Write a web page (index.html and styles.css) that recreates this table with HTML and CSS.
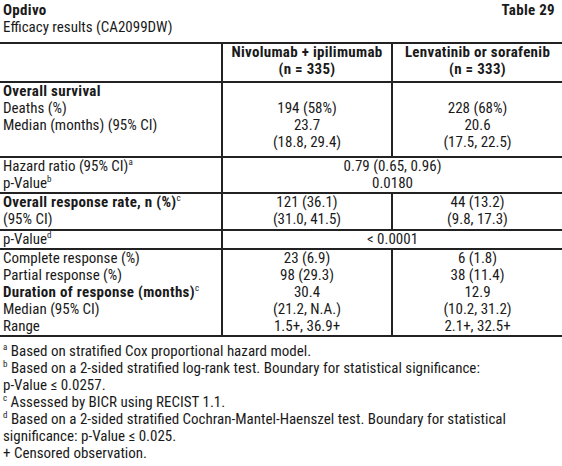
FILE: index.html
```html
<!DOCTYPE html>
<html lang="en">
<head>
<meta charset="UTF-8">
<meta name="viewport" content="width=device-width, initial-scale=1.0">
<title>Opdivo - Table 29</title>
<link rel="stylesheet" href="styles.css">
</head>
<body>

<div class="caption">
    <div class="caption-top">
        <span class="drug">Opdivo</span>
        <span class="table-no">Table 29</span>
    </div>
    <div class="subtitle">Efficacy results (CA2099DW)</div>
</div>

<table class="results">
    <colgroup>
        <col class="col-label">
        <col class="col-arm">
        <col class="col-arm">
    </colgroup>
    <thead>
        <tr>
            <th></th>
            <th>Nivolumab + ipilimumab<br>(n = 335)</th>
            <th>Lenvatinib or sorafenib<br>(n = 333)</th>
        </tr>
    </thead>
    <tbody class="survival">
        <tr>
            <td class="label"><b>Overall survival</b></td>
            <td></td>
            <td></td>
        </tr>
        <tr>
            <td class="label">Deaths (%)</td>
            <td>194 (58%)</td>
            <td>228 (68%)</td>
        </tr>
        <tr>
            <td class="label">Median (months) (95% CI)</td>
            <td>23.7</td>
            <td>20.6</td>
        </tr>
        <tr class="last">
            <td class="label"></td>
            <td>(18.8, 29.4)</td>
            <td>(17.5, 22.5)</td>
        </tr>
    </tbody>
    <tbody>
        <tr>
            <td class="label">Hazard ratio (95% CI)<sup>a</sup></td>
            <td colspan="2">0.79 (0.65, 0.96)</td>
        </tr>
        <tr>
            <td class="label">p-Value<sup>b</sup></td>
            <td colspan="2">0.0180</td>
        </tr>
    </tbody>
    <tbody class="response">
        <tr>
            <td class="label"><b>Overall response rate, n (%)</b><sup>c</sup></td>
            <td>121 (36.1)</td>
            <td>44 (13.2)</td>
        </tr>
        <tr class="last">
            <td class="label">(95% CI)</td>
            <td>(31.0, 41.5)</td>
            <td>(9.8, 17.3)</td>
        </tr>
    </tbody>
    <tbody>
        <tr>
            <td class="label">p-Value<sup>d</sup></td>
            <td colspan="2">&lt; 0.0001</td>
        </tr>
    </tbody>
    <tbody class="duration">
        <tr>
            <td class="label">Complete response (%)</td>
            <td>23 (6.9)</td>
            <td>6 (1.8)</td>
        </tr>
        <tr>
            <td class="label">Partial response (%)</td>
            <td>98 (29.3)</td>
            <td>38 (11.4)</td>
        </tr>
        <tr>
            <td class="label"><b>Duration of response (months)</b><sup>c</sup></td>
            <td>30.4</td>
            <td>12.9</td>
        </tr>
        <tr>
            <td class="label">Median (95% CI)</td>
            <td>(21.2, N.A.)</td>
            <td>(10.2, 31.2)</td>
        </tr>
        <tr class="last">
            <td class="label">Range</td>
            <td>1.5+, 36.9+</td>
            <td>2.1+, 32.5+</td>
        </tr>
    </tbody>
</table>

<div class="notes">
    <p><sup>a</sup> Based on stratified Cox proportional hazard model.</p>
    <p><sup>b</sup> Based on a 2-sided stratified log-rank test. Boundary for statistical significance:<br>p-Value &le; 0.0257.</p>
    <p><sup>c</sup> Assessed by BICR using RECIST 1.1.</p>
    <p><sup>d</sup> Based on a 2-sided stratified Cochran-Mantel-Haenszel test. Boundary for statistical<br>significance: p-Value &le; 0.025.</p>
    <p>+ Censored observation.</p>
</div>

</body>
</html>
```

FILE: styles.css
```css
body {
    margin: 0;
    background: #fff;
    color: #1a1a1a;
    font-family: "Roboto Condensed", Roboto, sans-serif;
    font-stretch: condensed;
    font-size: 15px;
    line-height: 17px;
}
b,
.caption-top,
.results th {
    letter-spacing: 0.3px;
}
.caption {
    padding: 2px 7px 0 3px;
}
.caption-top {
    display: flex;
    justify-content: space-between;
    font-weight: bold;
}
.results {
    width: 100%;
    margin-top: 6px;
    border-collapse: collapse;
    border-top: 2px solid #222;
    border-bottom: 2px solid #222;
}
.col-label {
    width: 222px;
}
.col-arm {
    width: 170px;
}
.results th {
    font-weight: bold;
    text-align: center;
    padding: 0 3px 3px;
    border-left: 2px solid #222;
}
.results th:first-child {
    border-left: none;
}
.results tbody {
    border-top: 2px solid #222;
}
.results td {
    padding: 0 3px;
    text-align: center;
    border-left: 2px solid #222;
    white-space: nowrap;
}
.results td.label {
    text-align: left;
    border-left: none;
}
.survival tr.last td {
    padding-bottom: 5px;
}
.response tr.last td {
    padding-bottom: 1px;
}
sup {
    font-size: 9px;
    line-height: 9px;
    vertical-align: top;
    letter-spacing: 0;
}
.notes {
    padding: 6px 3px 0;
}
.notes p {
    margin: 0;
}
```
